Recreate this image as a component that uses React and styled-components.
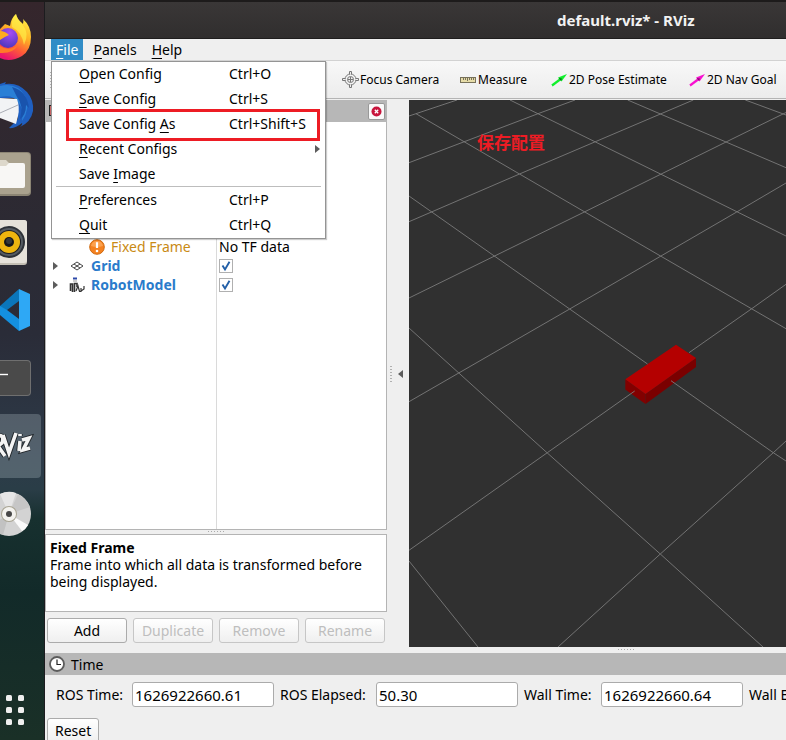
import React from "react";
import styled, { createGlobalStyle, css } from "styled-components";

const GlobalStyle = createGlobalStyle`
  * { box-sizing: border-box; }
  body {
    margin: 0;
    overflow: hidden;
    background: #efefef;
    color: #000;
    font: 14px/17px "Noto Sans", "Open Sans", "Noto Sans CJK SC", sans-serif;
  }
  button, input { font: inherit; color: inherit; margin: 0; }
`;

const Desktop = styled.div`
  display: flex;
  height: 100vh;
  border-top: 2px solid #1d1b1b;
`;

/* ---------- dock ---------- */

const Dock = styled.nav`
  flex: 0 0 45px;
  display: flex;
  flex-direction: column;
  gap: 4px;
  padding: 4px 0 0;
  border-right: 1px solid #1c1c1f;
  background: linear-gradient(#35262c 0, #2c2a33 30%, #2a2c38 45%, #2d3b49 62%, #2a3d47 66%, #17302f 70%, #122a29 80%, #1a3027 100%);
`;

const DockButton = styled.button`
  flex: 0 0 64px;
  width: 41px;
  padding: 0;
  border: 0;
  border-radius: 0 4px 4px 0;
  background: ${(p) => (p.$active ? "rgba(200, 215, 220, 0.25)" : "transparent")};
  svg { display: block; }
`;

const AppsButton = styled(DockButton)`
  margin: auto 0 0;
`;

/* ---------- window frame ---------- */

const Window = styled.main`
  flex: 1;
  min-width: 0;
  display: flex;
  flex-direction: column;
`;

const TitleBar = styled.header`
  flex: 0 0 37px;
  padding-left: 512px;
  background: linear-gradient(#3a3737, #302e2e);
  border-bottom: 1px solid #1f1e1e;
  color: #f2f2f2;
  font-size: 15px;
  font-weight: 700;
  line-height: 36px;
  white-space: nowrap;
`;

const MenuBar = styled.div`
  position: relative;
  z-index: 2;
  flex: 0 0 22px;
  display: flex;
  padding-left: 6px;
  background: #efefef;
  border-bottom: 1px solid #d2d2d2;
`;

const MenuTitle = styled.button`
  height: 21px;
  padding: 0 5px;
  border: 0;
  background: ${(p) => (p.$open ? "#308cc6" : "transparent")};
  color: ${(p) => (p.$open ? "#fff" : "#000")};
  line-height: 20px;
  & + & { margin-left: 5px; }
`;

const Key = styled.span`
  text-decoration: underline;
  text-underline-offset: 3px;
`;

const Menu = styled.div`
  position: absolute;
  top: 22px;
  left: 6px;
  width: 275px;
  background: #fff;
  border: 1px solid #949494;
  box-shadow: 1px 1px 1px rgba(0, 0, 0, 0.2);
`;

const MenuItem = styled.button`
  position: relative;
  display: grid;
  grid-template-columns: 150px 1fr 10px;
  align-items: center;
  width: 100%;
  height: 25px;
  padding: 0 0 2px 27px;
  border: 0;
  background: none;
  text-align: left;
  white-space: nowrap;
  svg { grid-column: 3; }
`;

const Shortcut = styled.span`
  grid-column: 2;
`;

const MenuLine = styled.hr`
  height: 1px;
  margin: -1px 4px 1px;
  border: 0;
  background: #bdbdbd;
`;

const RedFrame = styled.span`
  position: absolute;
  inset: -3px 5px -4px 14px;
  border: 3px solid #ed1c24;
`;

const ToolBar = styled.div`
  flex: 0 0 38px;
  display: flex;
  align-items: center;
  padding-left: 5px;
  overflow: hidden;
  background: linear-gradient(#f8f8f8, #ececec);
  border-bottom: 1px solid #b4b4b4;
`;

const Tools = styled.div`
  display: flex;
  margin-left: 290px;
`;

const Tool = styled.button`
  flex: none;
  display: flex;
  align-items: center;
  gap: 1px;
  width: ${(p) => p.$width}px;
  padding: 0;
  border: 0;
  background: none;
  font-size: 12px;
  white-space: nowrap;
`;

const Body = styled.div`
  flex: 1;
  min-height: 0;
  display: flex;
  padding-top: 1px;
`;

/* ---------- displays panel ---------- */

const Displays = styled.section`
  flex: 0 0 342px;
  display: flex;
  flex-direction: column;
`;

const PanelHeader = styled.div`
  flex: 0 0 22px;
  display: flex;
  align-items: center;
  justify-content: space-between;
  padding: 0 2px 0 4px;
  background: #b7b7b7;
`;

const CloseButton = styled.button`
  display: grid;
  place-items: center;
  width: 17px;
  height: 17px;
  padding: 0;
  border: 1px solid #999;
  border-radius: 2px;
  background: #fafafa;
`;

const Tree = styled.div`
  flex: 1;
  padding-top: 115px;
  border: 1px solid #b4b4b4;
  border-top: 0;
  background: linear-gradient(#dadada, #dadada) 170px 0 / 1px 100% no-repeat #fff;
`;

const TreeRow = styled.div`
  display: grid;
  grid-template-columns: 173px 1fr;
  align-items: center;
  height: 19px;
`;

const TreeName = styled.div`
  display: flex;
  align-items: center;
  gap: ${(p) => (p.$warn ? 6 : 0)}px;
  padding-left: ${(p) => (p.$warn ? 43 : 7)}px;
  color: ${(p) => (p.$warn ? "#c98a14" : "#2a7bcb")};
  font-weight: ${(p) => (p.$warn ? 400 : 700)};
  white-space: nowrap;
  svg { flex: none; }
`;

const TreeIcon = styled.span`
  display: flex;
  justify-content: center;
  width: 17px;
  margin: 0 6px 0 10px;
`;

const Tick = styled.label`
  display: grid;
  width: 14px;
  height: 14px;
  > * { grid-area: 1 / 1; }
  svg { pointer-events: none; }
`;

const TickBox = styled.input`
  appearance: none;
  width: 14px;
  height: 14px;
  border: 1px solid #b0b0b0;
  background: #fff;
`;

const Grip = styled.div`
  ${(p) =>
    p.$vertical
      ? css`
          width: 2px;
          height: 16px;
          background: repeating-linear-gradient(#b0b0b0 0 1px, transparent 1px 3px);
        `
      : css`
          width: 17px;
          height: 1px;
          margin: ${p.$margin};
          background: repeating-linear-gradient(90deg, #aaa 0 1px, transparent 1px 3px);
        `}
`;

const Help = styled.div`
  flex: 0 0 78px;
  padding: 4px;
  border: 1px solid #b4b4b4;
  background: #fff;
  strong { display: block; }
`;

const ButtonRow = styled.div`
  display: grid;
  grid-template-columns: repeat(4, 1fr);
  gap: 6px;
  padding: 6px 2px 4px;
`;

const PushButton = styled.button`
  height: 25px;
  padding: 0 7px;
  border: 1px solid #ababab;
  border-radius: 3px;
  background: linear-gradient(#fff, #efefef);
  &:disabled { color: #bebebe; border-color: #c6c6c6; }
`;

const Splitter = styled.div`
  flex: 0 0 22px;
  display: flex;
  align-items: center;
  justify-content: space-between;
  padding: 0 6px 0 3px;
`;

/* ---------- 3D view ---------- */

const View = styled.section`
  position: relative;
  flex: 1;
  min-width: 0;
  background: #303030;
  > svg { display: block; width: 100%; height: 100%; }
`;

const Note = styled.span`
  position: absolute;
  top: 32px;
  left: 68px;
  color: #ed1c24;
  font: 700 17px/20px "Noto Sans CJK SC", sans-serif;
`;

/* ---------- time panel ---------- */

const TimePanel = styled.section`
  flex: 0 0 93px;
  overflow: hidden;
`;

const TimeHeader = styled.div`
  display: flex;
  align-items: center;
  gap: 6px;
  height: 22px;
  padding-left: 4px;
  background: #b7b7b7;
`;

const TimeFields = styled.div`
  display: grid;
  grid-template-columns: 70px 142px 90px 142px 71px 142px max-content;
  align-items: center;
  gap: 6px;
  margin: 7px 0 11px 11px;
  white-space: nowrap;
`;

const TimeInput = styled.input`
  min-width: 0;
  height: 25px;
  padding: 0 2px;
  border: 1px solid #ababab;
  border-radius: 3px;
  background: #fff;
  font-size: 15px;
`;

const ResetWrap = styled.div`
  padding-left: 2px;
`;

/* ---------- drawings ---------- */

const DockArt = ({ children }) => (
  <svg width="41" height="64" viewBox="0 0 41 64">{children}</svg>
);

const Firefox = () => (
  <DockArt>
    <defs>
      <linearGradient id="fox" x1="0.7" y1="0" x2="0.3" y2="1">
        <stop offset="0" stopColor="#fff34a" />
        <stop offset="0.4" stopColor="#ffb325" />
        <stop offset="0.7" stopColor="#ff5e35" />
        <stop offset="1" stopColor="#ea1470" />
      </linearGradient>
      <radialGradient id="globe" cx="0.6" cy="0.25" r="0.8">
        <stop offset="0" stopColor="#a64df5" />
        <stop offset="1" stopColor="#4a35b8" />
      </radialGradient>
    </defs>
    <path d="M0 23 L5 18 L10 20 Q11 12 16 8 Q17 13 22 17 L23 18 Q24 15 23 13 Q31 20 31 31 Q31 44 22 50 Q10 57 0 52 Z" fill="url(#fox)" />
    <path d="M16 8 Q17 13 22 18 Q30 27 24 39 Q22 26 12 21 Q11 13 16 8" fill="#fff04a" opacity=".65" />
    <circle cx="8" cy="32" r="10" fill="url(#globe)" />
    <path d="M0 25 Q5 25 9 29 Q4 31 0 34 Z" fill="#ffac1f" />
    <path d="M0 40 Q9 46 18 39 Q13 48 0 47 Z" fill="#ff7a28" />
  </DockArt>
);

const Thunderbird = () => (
  <DockArt>
    <path d="M0 10 L6 8 L5 10 Q18 8 27 18 Q34 26 33 37 Q31 48 20 53 Q23 50 22 49 Q15 55 9 54 L18 45 L16 24 L0 24 Z" fill="#1f5fc0" />
    <path d="M0 12 Q17 8 25 22 Q31 34 22 47 Q24 35 18 28 Q13 20 0 23 Z" fill="#2a7fd6" />
    <path d="M12 13 Q27 17 29 34 L26 31 Q26 41 20 45 Q24 31 17 23 Z" fill="#1953ad" />
    <path d="M0 24 L17 25 Q20 33 18 42 L16 50 L0 44 Z" fill="#f2f3f5" />
    <path d="M0 39 L18 31" stroke="#a9acb4" strokeWidth="1" fill="none" />
  </DockArt>
);

const Files = () => (
  <DockArt>
    <rect x="-10" y="10" width="41" height="44" rx="4" fill="#8c8574" />
    <rect x="-10" y="11" width="40" height="41" rx="3" fill="#aaa28e" />
    <path d="M0 18 H6 L9 21 H22 V28 H0 Z" fill="#ddd8cb" />
    <path d="M0 24 H6 L9 21 H23 Q25 21 25 23 V44 Q25 46 23 46 H0 Z" fill="#f8f7f5" />
  </DockArt>
);

const Rhythmbox = () => (
  <DockArt>
    <rect x="-10" y="10" width="37" height="45" rx="3" fill="#c4bfb4" />
    <rect x="-10" y="10" width="37" height="43" rx="3" fill="#e6e2da" />
    <circle cx="9" cy="32" r="16" fill="#2e3238" />
    <circle cx="9" cy="32" r="14" fill="#555b62" />
    <circle cx="9" cy="32" r="12" fill="#1c1d20" />
    <circle cx="9" cy="32" r="11" fill="#eeb50f" />
    <circle cx="9" cy="32" r="5" fill="#17181b" />
    <circle cx="9" cy="31" r="3" fill="#34373b" />
  </DockArt>
);

const Code = () => (
  <DockArt>
    <path d="M0 28 L19 11 V23 L7 32 L0 37 Z" fill="#0b76bb" />
    <path d="M0 28 L7 32 L19 41 V53 L0 37 Z" fill="#1490df" />
    <path d="M19 11 L30 16 V48 L19 53 Z" fill="#2ea8f5" />
  </DockArt>
);

const Terminal = () => (
  <DockArt>
    <rect x="-10" y="14" width="41" height="36" rx="4" fill="#6f6f6f" />
    <rect x="-10" y="15" width="40" height="34" rx="3" fill="#4a4a4a" />
    <path d="M0 28.5 H8" stroke="#fff" strokeWidth="1.4" />
  </DockArt>
);

const MARK = "M-3 22 Q5 20 2 29 L-2 32 L5 42 M3 21 L9 39 L16 19 M20 27 L19 37 M20 20 V22 M22 26 L29 24 L23 36 L30 34";

const RvizMark = () => (
  <DockArt>
    <g fill="none" strokeLinejoin="miter">
      <path d={MARK} stroke="#22272b" strokeWidth="5.4" />
      <path d={MARK} stroke="#f4f4f4" strokeWidth="3.6" />
    </g>
  </DockArt>
);

const Disc = () => (
  <DockArt>
    <circle cx="9" cy="32" r="22" fill="#d3d3d3" />
    <path d="M9 32 L18 12 Q26 16 30 25 Z" fill="#c6c6c6" />
    <path d="M9 32 L28 43 Q26 47 22 49 Z" fill="#fafafa" />
    <path d="M9 32 L0 12 Q8 8 16 11 Z" fill="#e6e6e6" />
    <path d="M9 32 L3 53 Q-6 50 -10 44 Z" fill="#c2c2c2" />
    <circle cx="9" cy="32" r="8" fill="#a8a493" />
    <circle cx="9" cy="32" r="7" fill="#f3f2ee" />
    <circle cx="9" cy="32" r="3" fill="#474747" />
  </DockArt>
);

const AppsGrid = () => (
  <DockArt>
    {[19, 31, 43].map((y) =>
      [6, 18].map((x) => <rect key={`${x}-${y}`} x={x} y={y} width="6" height="6" rx="1.5" fill="#efefef" />)
    )}
  </DockArt>
);

const FocusIcon = () => (
  <svg width="17" height="17" viewBox="0 0 17 17" fill="none" stroke="#777" strokeWidth="1">
    <circle cx="8.5" cy="8.5" r="5.5" />
    <circle cx="8.5" cy="8.5" r="3" />
    <path d="M8.5 6 V11 M6 8.5 H11" />
    <path d="M7.5 3.5 V.5 H9.5 V3.5 M7.5 13.5 V16.5 H9.5 V13.5 M3.5 7.5 H.5 V9.5 H3.5 M13.5 7.5 H16.5 V9.5 H13.5" fill="#eee" />
  </svg>
);

const RulerIcon = () => (
  <svg width="17" height="16" viewBox="0 0 17 16">
    <rect x=".5" y="5.5" width="15" height="5" fill="#e6dca8" stroke="#77715a" />
    <path d="M3.5 6 V8 M5.5 6 V8 M7.5 6 V9 M9.5 6 V8 M11.5 6 V8 M13.5 6 V8" stroke="#77715a" />
  </svg>
);

const ArrowIcon = ({ color, dark }) => (
  <svg width="17" height="16" viewBox="0 0 17 16">
    <path d="M1 13.5 L9 7.5" stroke={color} strokeWidth="2.2" />
    <path d="M16 2 L7 5.5 L10.5 9.5 Z" fill={color} />
    <path d="M7.5 6 L10 9 L11 6.5 Z" fill={dark} />
  </svg>
);

const DisplaysIcon = () => (
  <svg width="14" height="14" viewBox="0 0 14 14">
    <rect x=".5" y="1.5" width="13" height="10" fill="#c86464" stroke="#222" />
  </svg>
);

const CloseIcon = () => (
  <svg width="11" height="11" viewBox="0 0 11 11">
    <circle cx="5.5" cy="5.5" r="5" fill="#c8143c" />
    <path d="M3.8 3.8 L7.2 7.2 M7.2 3.8 L3.8 7.2" stroke="#fff" strokeWidth="1.3" />
  </svg>
);

const Triangle = ({ left }) => (
  <svg width="5" height="8" viewBox="0 0 5 8">
    <path d={left ? "M5 0 V8 L0 4 Z" : "M0 0 V8 L5 4 Z"} fill="#5c5c5c" />
  </svg>
);

const WarnIcon = () => (
  <svg width="16" height="16" viewBox="0 0 16 16">
    <circle cx="8" cy="8" r="7.3" fill="#f58220" stroke="#cf6a10" />
    <path d="M2 7 Q3 2 8 2 Q13 2 14 7 Q8 9 2 7" fill="#ffae62" opacity=".7" />
    <path d="M8 3.2 V9" stroke="#fff" strokeWidth="2.2" />
    <circle cx="8" cy="12" r="1.3" fill="#fff" />
  </svg>
);

const GridIcon = () => (
  <svg width="14" height="10" viewBox="0 0 14 10" fill="none" stroke="#444">
    <path d="M7 1 L13 5 L7 9 L1 5 Z M4 3 L10 7 M10 3 L4 7" />
  </svg>
);

const RobotIcon = () => (
  <svg width="16" height="16" viewBox="0 0 16 16" fill="none" stroke="#333">
    <path d="M4 1.5 H8" stroke="#2c48a8" strokeWidth="2" />
    <path d="M4 4 H8" stroke="#999" />
    <path d="M1.5 14 V7 H3.5 V15 M5.5 15 V6.5 H8 V10" strokeWidth="1.6" />
    <path d="M7 14 L9 9 L10.5 14.5 H12 V11 M12 14 L15 12 V9" strokeWidth="1.2" />
  </svg>
);

const CheckMark = () => (
  <svg width="14" height="14" viewBox="0 0 14 14">
    <path d="M3.5 6.5 L6 10.5 L10.5 2.8" fill="none" stroke="#2360a8" strokeWidth="1.9" />
  </svg>
);

const ClockIcon = () => (
  <svg width="16" height="16" viewBox="0 0 16 16">
    <circle cx="8" cy="8" r="7" fill="#fff" stroke="#5c5c5c" strokeWidth="1.8" />
    <path d="M8 3.5 V8.5 H12" fill="none" stroke="#222" strokeWidth="1.2" />
  </svg>
);

const GRID_LINES = [
  "M0 461 L69 547",
  "M0 228 L138 352.7 L251.3 454 L354 547",
  "M0 96 L160.7 209 L238.5 264",
  "M262 280.7 L364.3 352.7 L377 361",
  "M7 13.7 L110.5 74 L251.5 156 L377 228.7",
  "M101 0 L186.5 42 L251.5 74 L377 136",
  "M218.7 0 L317 42 L377 67.7",
  "M336.3 0 L377 15",
  "M0 16 L48 0",
  "M0 62.7 L129 13.7 L166 0",
  "M0 121.7 L110.5 74 L284.3 0",
  "M0 198 L175.3 112 L317 42 L377 12.5",
  "M0 301.7 L160.7 209 L327.7 112 L377 83",
  "M0 450.3 L138.3 352.7 L225.7 291",
  "M280 252.7 L342.3 209 L377 184.3",
  "M149 547 L251.3 454 L364.3 352.7 L377 341",
];

const Scene = () => (
  <svg viewBox="0 0 377 547" preserveAspectRatio="xMinYMin slice">
    <path d="M216.3 279.3 L236.5 294 V304 L216.3 289.5 Z" fill="#820000" />
    <path d="M236.5 294 L287 258 V267 L236.5 304 Z" fill="#7a0000" />
    <path d="M267 244.7 L287 258 L236.5 294 L216.3 279.3 Z" fill="#b40000" />
    <path d={GRID_LINES.join(" ")} fill="none" stroke="#7a7a7a" strokeWidth="0.9" />
  </svg>
);

/* ---------- data ---------- */

const DOCK = [
  ["Firefox", Firefox],
  ["Thunderbird", Thunderbird],
  ["Files", Files],
  ["Rhythmbox", Rhythmbox],
  ["Visual Studio Code", Code],
  ["Terminal", Terminal],
  ["RViz", RvizMark],
  ["Disc", Disc],
];

const MENU = [
  { pre: "", key: "O", post: "pen Config", shortcut: "Ctrl+O" },
  { pre: "", key: "S", post: "ave Config", shortcut: "Ctrl+S" },
  { pre: "Save Config ", key: "A", post: "s", shortcut: "Ctrl+Shift+S", framed: true },
  { pre: "", key: "R", post: "ecent Configs", submenu: true },
  { pre: "Save ", key: "I", post: "mage" },
  null,
  { pre: "", key: "P", post: "references", shortcut: "Ctrl+P" },
  { pre: "", key: "Q", post: "uit", shortcut: "Ctrl+Q" },
];

const TIMES = [
  ["ros-time", "ROS Time:", "1626922660.61"],
  ["ros-elapsed", "ROS Elapsed:", "50.30"],
  ["wall-time", "Wall Time:", "1626922660.64"],
];

const DisplayRow = ({ name, icon }) => (
  <TreeRow>
    <TreeName>
      <Triangle />
      <TreeIcon>{icon}</TreeIcon>
      {name}
    </TreeName>
    <Tick>
      <TickBox type="checkbox" defaultChecked aria-label={name} />
      <CheckMark />
    </Tick>
  </TreeRow>
);

export default function App() {
  return (
    <>
      <GlobalStyle />
      <Desktop>
        <Dock>
          {DOCK.map(([name, Art]) => (
            <DockButton key={name} aria-label={name} $active={name === "RViz"}>
              <Art />
            </DockButton>
          ))}
          <AppsButton aria-label="Show Applications">
            <AppsGrid />
          </AppsButton>
        </Dock>
        <Window>
          <TitleBar>default.rviz* - RViz</TitleBar>
          <MenuBar>
            <MenuTitle $open><Key>F</Key>ile</MenuTitle>
            <MenuTitle><Key>P</Key>anels</MenuTitle>
            <MenuTitle><Key>H</Key>elp</MenuTitle>
            <Menu>
              {MENU.map((item, i) =>
                item ? (
                  <MenuItem key={i}>
                    <span>{item.pre}<Key>{item.key}</Key>{item.post}</span>
                    {item.shortcut && <Shortcut>{item.shortcut}</Shortcut>}
                    {item.submenu && <Triangle />}
                    {item.framed && <RedFrame />}
                  </MenuItem>
                ) : (
                  <MenuLine key={i} />
                )
              )}
            </Menu>
          </MenuBar>
          <ToolBar>
            <Grip $vertical />
            <Tools>
              <Tool $width={118}><FocusIcon />Focus Camera</Tool>
              <Tool $width={91}><RulerIcon />Measure</Tool>
              <Tool $width={138}><ArrowIcon color="#10f02c" dark="#087a18" />2D Pose Estimate</Tool>
              <Tool $width={90}><ArrowIcon color="#f810d0" dark="#860a72" />2D Nav Goal</Tool>
            </Tools>
          </ToolBar>
          <Body>
            <Displays>
              <PanelHeader>
                <DisplaysIcon />
                <CloseButton aria-label="Close"><CloseIcon /></CloseButton>
              </PanelHeader>
              <Tree>
                <TreeRow>
                  <TreeName $warn><WarnIcon />Fixed Frame</TreeName>
                  <span>No TF data</span>
                </TreeRow>
                <DisplayRow name="Grid" icon={<GridIcon />} />
                <DisplayRow name="RobotModel" icon={<RobotIcon />} />
              </Tree>
              <Grip $margin="1px auto 2px" />
              <Help>
                <strong>Fixed Frame</strong>
                Frame into which all data is transformed before being displayed.
              </Help>
              <ButtonRow>
                <PushButton>Add</PushButton>
                <PushButton disabled>Duplicate</PushButton>
                <PushButton disabled>Remove</PushButton>
                <PushButton disabled>Rename</PushButton>
              </ButtonRow>
            </Displays>
            <Splitter>
              <Grip $vertical />
              <Triangle left />
            </Splitter>
            <View>
              <Scene />
              <Note>保存配置</Note>
            </View>
          </Body>
          <TimePanel>
            <Grip $margin="2px 0 3px 573px" />
            <TimeHeader><ClockIcon />Time</TimeHeader>
            <TimeFields>
              {TIMES.map(([id, label, value]) => (
                <React.Fragment key={id}>
                  <label htmlFor={id}>{label}</label>
                  <TimeInput id={id} defaultValue={value} />
                </React.Fragment>
              ))}
              <span>Wall Elapsed:</span>
            </TimeFields>
            <ResetWrap><PushButton>Reset</PushButton></ResetWrap>
          </TimePanel>
        </Window>
      </Desktop>
    </>
  );
}
